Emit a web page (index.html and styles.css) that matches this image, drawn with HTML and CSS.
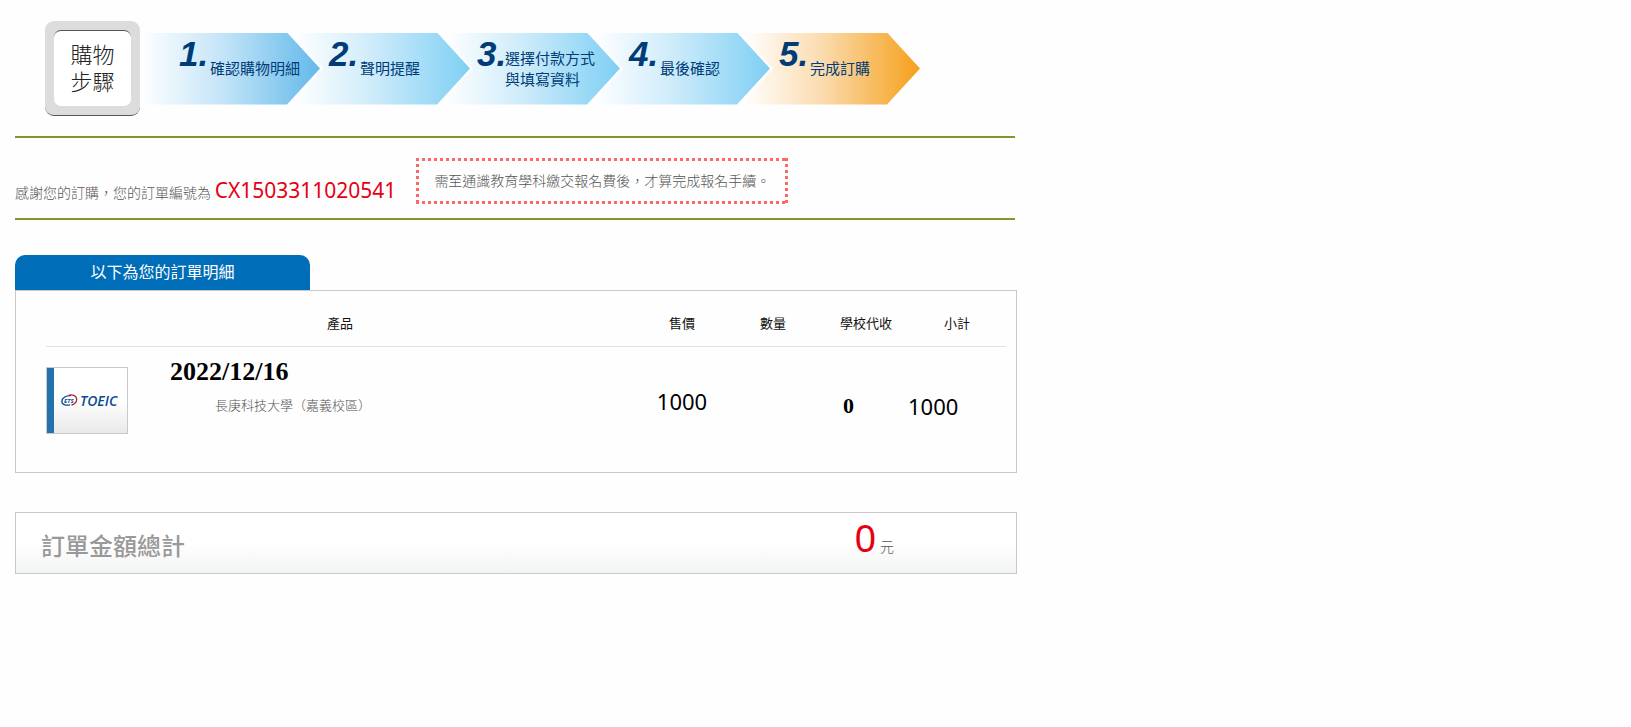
FILE: index.html
```html
<!DOCTYPE html>
<html lang="zh-Hant">
<head>
  <meta charset="UTF-8" />
  <meta name="viewport" content="width=device-width, initial-scale=1.0"/>
  <title>完成訂購</title>
  <link rel="stylesheet" href="styles.css">
</head>
<body>

  <div class="container">

    <div class="steps">
      <div class="steps-title"><span>購物<br />步驟</span></div>
      <ol class="step-list">
        <li class="step first"><span class="num">1.</span><span class="text">確認購物明細</span></li>
        <li class="step"><span class="num">2.</span><span class="text">聲明提醒</span></li>
        <li class="step long"><span class="num">3.</span><span class="text">選擇付款方式<br />與填寫資料</span></li>
        <li class="step"><span class="num">4.</span><span class="text">最後確認</span></li>
        <li class="step active"><span class="num">5.</span><span class="text">完成訂購</span></li>
      </ol>
    </div>

    <div class="order-info">
      <p class="thanks">感謝您的訂購，您的訂單編號為 <span class="order-no">CX1503311020541</span></p>
      <p class="notice">需至通識教育學科繳交報名費後，才算完成報名手續。</p>
    </div>

    <h2 class="detail-title">以下為您的訂單明細</h2>
    <div class="detail">
      <table class="detail-table">
        <colgroup>
          <col class="col-logo" />
          <col />
          <col class="col-price" />
          <col class="col-qty" />
          <col class="col-school" />
          <col class="col-sum" />
        </colgroup>
        <thead>
          <tr>
            <th colspan="2">產品</th>
            <th>售價</th>
            <th>數量</th>
            <th class="head-school">學校代收</th>
            <th>小計</th>
          </tr>
        </thead>
        <tbody>
          <tr>
            <td>
              <div class="logo">
                <svg width="60" height="24" viewBox="0 -5 60 24" role="img" aria-label="ETS TOEIC">
                  <path d="M10 1.600C5 1.200 1.200 4 .9 7.200c-.2 3.200 3.500 4.700 8.100 3.700" fill="none" stroke="#0b4a94" stroke-width="1.300"/>
                  <path d="M7.500 1.400c4.500-1.300 8.300.6 8.200 4.100-.1 2.600-2.200 4.700-5.200 5.500" fill="none" stroke="#b5202c" stroke-width="1.300"/>
                  <text class="logo-ets" x="3" y="9">ETS</text>
                  <text class="logo-toeic" x="19" y="12">TOEIC</text>
                </svg>
              </div>
            </td>
            <td class="cell-name">
              <div class="date">2022/12/16</div>
              <div class="place">長庚科技大學（嘉義校區）</div>
            </td>
            <td class="cell-price">1000</td>
            <td></td>
            <td class="cell-school">0</td>
            <td class="cell-sum">1000</td>
          </tr>
        </tbody>
      </table>
    </div>

    <div class="total">
      <h3 class="total-title">訂單金額總計</h3>
      <p class="total-price"><span class="amount">0</span> 元</p>
    </div>

  </div>

</body>
</html>
```
FILE: styles.css
```css
body {
  margin: 0;
  font-family: "Noto Sans", "Noto Sans CJK TC", sans-serif;
  font-size: 14px;
  color: #555;
  background-color: #fefefe;
}

h2, h3, p, ol {
  margin: 0;
  padding: 0;
  font-weight: normal;
}

.container {
  max-width: 1002px;
  padding: 21px 15px 40px;
}

/* steps */
.steps {
  display: flex;
  align-items: center;
  padding-left: 30px;
}

.steps-title {
  display: flex;
  box-sizing: border-box;
  width: 95px;
  height: 95px;
  padding: 9px;
  border-bottom: 1px solid #555;
  border-radius: 9px;
  background-color: #dcdcdc;
}

.steps-title span {
  flex: 1;
  padding-top: 9px;
  border-top: 1px solid #555;
  border-radius: 7px;
  background-color: #fff;
  font-family: "Noto Sans CJK TC", sans-serif;
  font-weight: 300;
  font-size: 22px;
  line-height: 27px;
  text-align: center;
  color: #222;
}

.step-list {
  display: flex;
  list-style: none;
}

.step {
  display: flex;
  box-sizing: border-box;
  width: 180px;
  height: 72px;
  margin-left: -30px;
  padding-left: 39px;
  background: linear-gradient(to right, #fff 2%, #cfecfa 45%, #7fcff4);
  clip-path: polygon(0 0, 147px 0, 100% 50%, 147px 100%, 0 100%, 33px 50%);
  color: #003c78;
}

.step.first {
  margin-left: 0;
  background: linear-gradient(to right, #fff, #c5e5f8 45%, #62b9ea);
  clip-path: polygon(0 0, 147px 0, 100% 50%, 147px 100%, 0 100%);
}

.step.active {
  background: linear-gradient(to right, #fff 2%, #fbdcb0 45%, #f5a01a);
}

.num {
  width: 31px;
  font-family: "Liberation Sans", Arial, sans-serif;
  font-size: 35px;
  font-weight: bold;
  font-style: italic;
  line-height: 42px;
}

.text {
  padding-top: 24px;
  font-family: "Noto Sans CJK TC", sans-serif;
  font-size: 15px;
  line-height: 21px;
  white-space: nowrap;
}

.step.long {
  padding-left: 37px;
}

.step.long .num {
  width: 28px;
}

.step.long .text {
  padding-top: 14px;
}

/* order number */
.order-info {
  display: flex;
  align-items: flex-start;
  gap: 20px;
  max-width: 1000px;
  margin-top: 20px;
  padding: 20px 0 11px;
  border-top: 2px solid #7f972b;
  border-bottom: 2px solid #7f972b;
  box-sizing: border-box;
}

.thanks {
  padding-top: 18px;
  font-weight: 300;
  line-height: 28px;
}

.order-no {
  font-size: 21px;
  font-weight: 400;
  color: #e60012;
}

/* square dots on all four sides */
.notice {
  padding: 12px 18px;
  font-weight: 300;
  line-height: 22px;
  background:
    repeating-linear-gradient(to right, #f66 0 3px, transparent 3px 6px) top / 100% 3px no-repeat,
    repeating-linear-gradient(to right, #f66 0 3px, transparent 3px 6px) bottom / 100% 3px no-repeat,
    repeating-linear-gradient(to bottom, #f66 0 3px, transparent 3px 6px) left / 3px 100% no-repeat,
    repeating-linear-gradient(to bottom, #f66 0 3px, transparent 3px 6px) right / 3px 100% no-repeat;
}

/* order detail */
.detail-title {
  width: 295px;
  margin-top: 35px;
  border-radius: 10px 10px 0 0;
  background-color: #006db9;
  color: #fff;
  font-size: 16px;
  line-height: 35px;
  text-align: center;
}

.detail {
  padding: 13px 10px 38px 30px;
  border: 1px solid #c9c9c9;
}

.detail-table {
  width: 100%;
  table-layout: fixed;
  border-collapse: collapse;
}

.detail-table th {
  height: 36px;
  padding: 0 0 6px;
  border-bottom: 1px solid #e2e2e2;
  font-size: 13px;
  font-weight: normal;
  color: #111;
}

.detail-table .head-school {
  padding-left: 8px;
}

.detail-table td {
  padding: 0;
  vertical-align: top;
}

.col-logo {
  width: 124px;
}

.col-price {
  width: 96px;
}

.col-qty {
  width: 86px;
}

.col-school {
  width: 92px;
}

.col-sum {
  width: 98px;
}

.logo {
  display: flex;
  align-items: center;
  box-sizing: border-box;
  width: 82px;
  height: 67px;
  margin-top: 20px;
  padding-left: 14px;
  border: 1px solid #c9c9c9;
  background: linear-gradient(to right, #2472ac 7px, transparent 7px), linear-gradient(#fff 50%, #e9e9e9);
}

.logo-ets {
  font: italic bold 6px "Open Sans", sans-serif;
  fill: #0b4a94;
}

.logo-toeic {
  font: italic 600 14px "Open Sans", sans-serif;
  fill: #0b4a94;
}

.detail-table .cell-name {
  padding-top: 10px;
}

.date {
  font-family: "Liberation Serif", serif;
  font-size: 26px;
  font-weight: bold;
  line-height: 30px;
  color: #000;
}

.place {
  padding: 8px 0 0 45px;
  font-size: 13px;
  font-weight: 300;
  line-height: 20px;
}

.detail-table .cell-price,
.detail-table .cell-sum {
  padding-top: 39px;
  font-size: 22px;
  line-height: 30px;
  text-align: center;
  color: #000;
}

.detail-table .cell-sum {
  padding-top: 44px;
  text-align: left;
}

.detail-table .cell-school {
  padding: 44px 0 0 27px;
  font-family: "Liberation Serif", serif;
  font-size: 22px;
  font-weight: bold;
  line-height: 30px;
  color: #000;
}

/* total */
.total {
  display: flex;
  justify-content: space-between;
  margin-top: 39px;
  padding: 0 122px 0 25px;
  border: 1px solid #c9c9c9;
  background: linear-gradient(#fff 50%, #f2f3f3);
}

.total-title {
  padding: 7px 0 2px;
  font-size: 24px;
  font-weight: 500;
  line-height: 51px;
  color: #999;
}

.total-price {
  font-weight: 300;
  line-height: 48px;
}

.amount {
  font-size: 38px;
  font-weight: 400;
  color: #e60012;
}
```
